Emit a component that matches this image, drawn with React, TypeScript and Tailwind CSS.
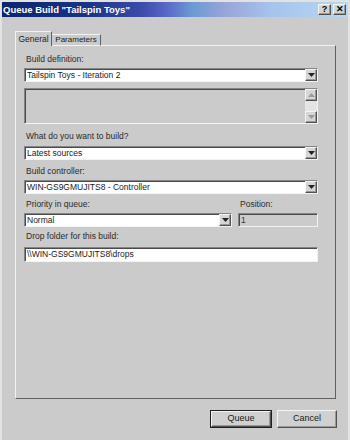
import React from 'react';

const sunken =
  'border border-t-[#858585] border-l-[#858585] border-b-[#f4f4f4] border-r-[#f4f4f4] shadow-[inset_1px_1px_0_#4a4a4a]';
const raised =
  'border border-t-[#f4f4f4] border-l-[#f4f4f4] border-b-[#505050] border-r-[#505050] shadow-[inset_-1px_-1px_0_#999]';

function Tri({ up = false, color = '#000' }: { up?: boolean; color?: string }) {
  return (
    <svg width="7" height="4" viewBox="0 0 7 4">
      <path d={up ? 'M0 4 L3.5 0 L7 4 Z' : 'M0 0 L7 0 L3.5 4 Z'} fill={color} />
    </svg>
  );
}

function DropBtn() {
  return (
    <div className={`w-[12px] h-full bg-[#d6d6d6] flex items-center justify-center ${raised}`}>
      <Tri color="#222" />
    </div>
  );
}

function Combo({ value, className = '' }: { value: string; className?: string }) {
  return (
    <div className={`h-[14px] bg-white flex items-stretch ${sunken} ${className}`}>
      <div className="flex-1 pl-[2px] text-[8.5px] leading-[12px] text-[#1a1a1a] truncate">{value}</div>
      <DropBtn />
    </div>
  );
}

function Label({ children, className = '' }: { children: React.ReactNode; className?: string }) {
  return <div className={`h-[12px] pl-[2px] text-[8.5px] leading-[12px] text-[#2a2a2a] ${className}`}>{children}</div>;
}

export default function App() {
  return (
    <div className="w-[350px] h-[440px] bg-[#cbcbcb] flex flex-col font-['Liberation_Sans',Arial,sans-serif] border-l-2 border-r-2 border-t-2 border-[#e2e2e2] overflow-hidden">
      {/* title bar */}
      <div className="h-[15px] flex items-center justify-between pl-[1px] pr-[2px] bg-[linear-gradient(90deg,#0c2470_0%,#1a3585_25%,#3c4aa8_40%,#5a6ac8_48%,#6c9ad4_55%,#9aa6d8_65%,#a6c4ec_78%,#b8d8f2_100%)]">
        <span className="text-white font-bold text-[9.5px] leading-none">Queue Build "Tailspin Toys"</span>
        <div className="flex gap-[2px]">
          <div className={`w-[13px] h-[11px] bg-[#d4d4d4] flex items-center justify-center text-[9px] font-bold leading-none text-black ${raised}`}>?</div>
          <div className={`w-[13px] h-[11px] bg-[#d4d4d4] flex items-center justify-center text-[9px] font-bold leading-none text-black ${raised}`}>✕</div>
        </div>
      </div>

      <div className="flex flex-col pl-[13px] pr-[12px]">
        {/* tabs */}
        <div className="mt-[14px] h-[15px] flex items-end -mb-px relative z-10">
          <div className="h-[15px] w-[37px] bg-[#cbcbcb] border-t border-l border-t-[#f2f2f2] border-l-[#f2f2f2] border-r border-r-[#606060] flex items-center justify-center text-[8.5px] text-[#1a1a1a]">
            General
          </div>
          <div className="h-[12px] w-[49px] bg-[#cbcbcb] border-t border-t-[#f2f2f2] border-r border-r-[#606060] border-b border-b-[#f2f2f2] flex items-center justify-center text-[8px] text-[#1a1a1a]">
            Parameters
          </div>
        </div>

        {/* panel */}
        <div className="w-[321px] h-[354px] border border-t-[#f2f2f2] border-l-[#f2f2f2] border-r-[#606060] border-b-[#606060] pl-[8px] pt-[7px] flex flex-col">
          <Label>Build definition:</Label>
          <Combo value="Tailspin Toys - Iteration 2" className="mt-[3px] w-[294px]" />
          <div className={`mt-[6px] w-[294px] h-[36px] bg-[#cbcbcb] flex justify-end ${sunken}`}>
            <div className="w-[12px] h-full flex flex-col bg-[#e4e4e4]">
              <div className={`h-[12px] bg-[#d6d6d6] flex items-center justify-center ${raised}`}>
                <Tri up color="#9a9a9a" />
              </div>
              <div className="flex-1" />
              <div className={`h-[12px] bg-[#d6d6d6] flex items-center justify-center ${raised}`}>
                <Tri color="#9a9a9a" />
              </div>
            </div>
          </div>

          <Label className="mt-[6px]">What do you want to build?</Label>
          <Combo value="Latest sources" className="mt-[4px] w-[294px]" />

          <Label className="mt-[5px]">Build controller:</Label>
          <Combo value="WIN-GS9GMUJITS8 - Controller" className="mt-[3px] w-[294px]" />

          <div className="mt-[4px] flex">
            <Label className="w-[214px]">Priority in queue:</Label>
            <Label>Position:</Label>
          </div>
          <div className="mt-[3px] flex">
            <Combo value="Normal" className="w-[208px]" />
            <div className={`ml-[6px] w-[80px] h-[14px] bg-[#cbcbcb] pl-[2px] text-[8.5px] leading-[12px] text-[#333] ${sunken}`}>1</div>
          </div>

          <Label className="mt-[3px]">Drop folder for this build:</Label>
          <div className={`mt-[5px] w-[294px] h-[15px] bg-white pl-[2px] text-[8.5px] leading-[13px] text-[#1a1a1a] ${sunken}`}>
            \\WIN-GS9GMUJITS8\drops
          </div>
        </div>

        {/* buttons */}
        <div className="mt-[11px] flex justify-end gap-[5px] mr-[-1px]">
          <div className="w-[62px] h-[18px] border border-[#202020] bg-[#d0d0d0]">
            <div className={`w-full h-full flex items-center justify-center text-[9px] text-[#1a1a1a] ${raised}`}>Queue</div>
          </div>
          <div className={`w-[60px] h-[18px] bg-[#d0d0d0] flex items-center justify-center text-[9px] text-[#1a1a1a] ${raised}`}>Cancel</div>
        </div>
      </div>
    </div>
  );
}
